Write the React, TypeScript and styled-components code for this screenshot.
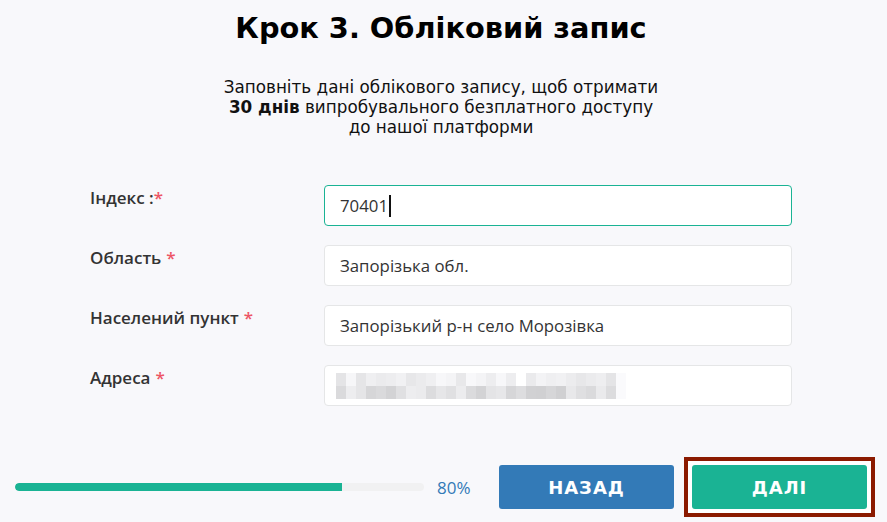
import React from "react";
import styled, { createGlobalStyle } from "styled-components";

const GlobalStyle = createGlobalStyle`
  html, body {
    margin: 0;
    padding: 0;
    background: #f8f8fb;
  }
  * {
    box-sizing: border-box;
  }
`;

const Page = styled.div`
  width: 887px;
  height: 522px;
  display: flex;
  flex-direction: column;
  background: #f8f8fb;
  overflow: hidden;
`;

const Title = styled.h2`
  margin: 11px 0 0;
  padding-right: 5px;
  text-align: center;
  font-family: "DejaVu Sans", sans-serif;
  font-weight: bold;
  font-size: 28.8px;
  line-height: 34px;
  color: #000;
`;

const Lead = styled.p`
  margin: 32px 0 0;
  padding-right: 5px;
  text-align: center;
  font-family: "DejaVu Sans", sans-serif;
  font-size: 16.8px;
  line-height: 20px;
  color: #111;

  b {
    font-weight: bold;
  }
`;

const Form = styled.div`
  display: flex;
  flex-direction: column;
  gap: 19px;
  margin: 48px 0 0 90px;
`;

const Row = styled.div`
  display: flex;
  align-items: flex-start;
`;

const Label = styled.div`
  width: 234px;
  padding-top: 1px;
  font-family: "Open Sans", sans-serif;
  font-weight: 600;
  font-size: 17px;
  line-height: 24px;
  color: #333;
`;

const Star = styled.span<{ $tight?: boolean }>`
  color: #ed5565;
  margin-left: ${(p) => (p.$tight ? "0" : "5px")};
`;

const Field = styled.div<{ $active?: boolean }>`
  width: 468px;
  height: 41px;
  display: flex;
  align-items: center;
  padding: 0 15px;
  background: #fff;
  border: 1px solid ${(p) => (p.$active ? "#1ab394" : "#e5e6e7")};
  border-radius: 4px;
  font-family: "Open Sans", sans-serif;
  font-size: 16.8px;
  color: #333;
`;

const Caret = styled.span`
  display: inline-block;
  width: 2px;
  height: 22px;
  margin-left: 1px;
  background: #111;
`;

const Mosaic = styled.div`
  display: grid;
  grid-template-columns: repeat(29, 10px);
  grid-auto-rows: 13px;
  margin-left: -4px;
`;

const Cell = styled.span<{ $shade: number }>`
  background: ${(p) => `rgb(${p.$shade}, ${p.$shade}, ${p.$shade + 2})`};
`;

const Footer = styled.div`
  display: flex;
  align-items: center;
  margin-top: auto;
  padding: 0 12px 5px 15px;
`;

const Track = styled.div`
  width: 409px;
  height: 8px;
  border-radius: 4px;
  background: #f1f1f2;
  overflow: hidden;
`;

const Fill = styled.div`
  height: 100%;
  background: #1ab394;
  border-radius: 4px 0 0 4px;
`;

const Percent = styled.span`
  margin-left: 13px;
  font-family: "Open Sans", sans-serif;
  font-size: 17px;
  color: #337ab7;
`;

const Buttons = styled.div`
  display: flex;
  align-items: center;
  margin-left: auto;
  gap: 10px;
`;

const Button = styled.button<{ $tone: "blue" | "green" }>`
  width: 175px;
  height: 44px;
  border: none;
  border-radius: 3px;
  background: ${(p) => (p.$tone === "blue" ? "#337ab7" : "#1ab394")};
  color: #fff;
  font-family: "DejaVu Sans", sans-serif;
  font-weight: bold;
  font-size: 18px;
  letter-spacing: 1px;
  cursor: pointer;
`;

const Highlight = styled.div`
  padding: 4px;
  border: 4px solid #8b1a00;
  background: #fff;
`;

const fields = [
  { label: "Індекс :", value: "70401", active: true, tight: true },
  { label: "Область", value: "Запорізька обл." },
  { label: "Населений пункт", value: "Запорізький р-н село Морозівка" },
  { label: "Адреса", value: "" },
];

// pixelated address placeholder
const shades = Array.from({ length: 58 }, (_, i) => {
  const col = i % 29;
  if (i < 29 && col === 18) return 255;
  if (col === 28) return 250;
  const v = Math.sin(i * 12.9898) * 43758.5453;
  const r = v - Math.floor(v);
  return i < 29 ? 228 + Math.round(r * 20) : 204 + Math.round(r * 34);
});

export default function App() {
  const progress = 80;
  return (
    <>
      <GlobalStyle />
      <Page>
        <Title>Крок 3. Обліковий запис</Title>
        <Lead>
          Заповніть дані облікового запису, щоб отримати
          <br />
          <b>30 днів</b> випробувального безплатного доступу
          <br />
          до нашої платформи
        </Lead>
        <Form>
          {fields.map((f) => (
            <Row key={f.label}>
              <Label>
                {f.label}
                <Star $tight={f.tight}>*</Star>
              </Label>
              <Field $active={f.active}>
                {f.value}
                {f.active && <Caret />}
                {f.label === "Адреса" && (
                  <Mosaic>
                    {shades.map((s, i) => (
                      <Cell key={i} $shade={s} />
                    ))}
                  </Mosaic>
                )}
              </Field>
            </Row>
          ))}
        </Form>
        <Footer>
          <Track>
            <Fill style={{ width: `${progress}%` }} />
          </Track>
          <Percent>{progress}%</Percent>
          <Buttons>
            <Button $tone="blue">НАЗАД</Button>
            <Highlight>
              <Button $tone="green">ДАЛІ</Button>
            </Highlight>
          </Buttons>
        </Footer>
      </Page>
    </>
  );
}
